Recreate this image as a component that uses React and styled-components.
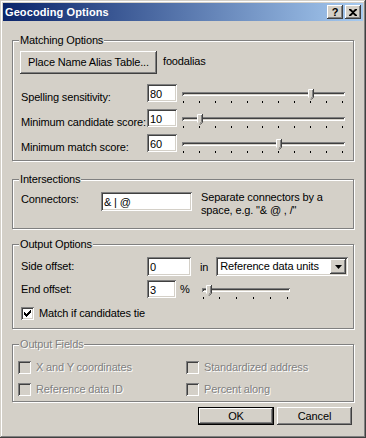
import React from "react";
import styled, { createGlobalStyle } from "styled-components";

const FACE = "#d4d0c8";
const SUNKEN =
  "inset 1px 1px #808080, inset -1px -1px #ffffff, inset 2px 2px #404040, inset -2px -2px #d4d0c8";
const RAISED =
  "inset -1px -1px #404040, inset 1px 1px #ffffff, inset -2px -2px #808080, inset 2px 2px #d4d0c8";

const GlobalStyle = createGlobalStyle`
  html, body {
    margin: 0;
    padding: 0;
    background: ${FACE};
  }
  body {
    font-family: "Liberation Sans", Arial, sans-serif;
    font-size: 11px;
    letter-spacing: -0.15px;
    color: #000;
  }
`;

const Window = styled.div`
  width: 366px;
  height: 438px;
  box-sizing: border-box;
  padding: 3px;
  background: ${FACE};
  box-shadow: inset -1px -1px #404040, inset 1px 1px ${FACE},
    inset -2px -2px #808080, inset 2px 2px #ffffff;
  display: flex;
  flex-direction: column;
`;

const TitleBar = styled.div`
  height: 18px;
  flex-shrink: 0;
  display: flex;
  align-items: center;
  justify-content: space-between;
  padding: 0 2px;
  background: linear-gradient(to right, #0a246a, #a6caf0);
`;

const Title = styled.span`
  color: #fff;
  font-weight: bold;
  font-size: 11px;
  letter-spacing: 0.1px;
`;

const CaptionButtons = styled.div`
  display: flex;
  gap: 2px;
`;

const CaptionButton = styled.div`
  width: 16px;
  height: 14px;
  box-sizing: border-box;
  background: ${FACE};
  box-shadow: ${RAISED};
  display: flex;
  align-items: center;
  justify-content: center;
  font-weight: bold;
  font-size: 11px;
  line-height: 14px;
`;

const Body = styled.div`
  padding: 0 9px;
  display: flex;
  flex-direction: column;
`;

const Group = styled.div`
  margin-top: ${(p) => p.$mt}px;
  border: 1px solid #808080;
  box-shadow: inset 1px 1px #fff, 1px 1px #fff;
  padding: 0 8px ${(p) => p.$pb}px 8px;
`;

const Legend = styled.div`
  width: fit-content;
  margin: -7px 0 0 -2px;
  padding: 0 1px;
  line-height: 13px;
  background: ${FACE};
  color: ${(p) => (p.$disabled ? "#808080" : "#000")};
  text-shadow: ${(p) => (p.$disabled ? "1px 1px #fff" : "none")};
`;

const Row = styled.div`
  display: flex;
  align-items: flex-start;
  height: ${(p) => p.$h}px;
  margin-top: ${(p) => p.$mt || 0}px;
`;

const Label = styled.span`
  width: ${(p) => (p.$w ? p.$w + "px" : "auto")};
  flex-shrink: 0;
  padding-top: ${(p) => p.$pt || 0}px;
  margin-left: ${(p) => p.$ml || 0}px;
  line-height: 13px;
  white-space: nowrap;
`;

const Field = styled.div`
  width: ${(p) => p.$w}px;
  height: ${(p) => p.$h}px;
  flex-shrink: 0;
  box-sizing: border-box;
  padding: ${(p) => p.$pt || 4}px 3px 0;
  background: #fff;
  box-shadow: ${SUNKEN};
  line-height: 13px;
  white-space: nowrap;
  overflow: hidden;
`;

const Button = styled.div`
  width: ${(p) => p.$w}px;
  height: ${(p) => p.$h}px;
  flex-shrink: 0;
  box-sizing: border-box;
  margin-left: ${(p) => p.$ml || 0}px;
  background: ${FACE};
  box-shadow: ${RAISED};
  border: ${(p) => (p.$default ? "1px solid #000" : "none")};
  display: flex;
  align-items: center;
  justify-content: center;
  line-height: 13px;
  white-space: nowrap;
`;

const Aside = styled.span`
  margin-left: ${(p) => p.$ml || 0}px;
  margin-top: ${(p) => p.$mt || 0}px;
  line-height: 13px;
  padding-top: ${(p) => p.$pt || 0}px;
  white-space: nowrap;
`;

const SliderBox = styled.div`
  position: relative;
  width: ${(p) => p.$w}px;
  margin-left: ${(p) => p.$ml || 0}px;
  padding-top: ${(p) => p.$pt}px;
  flex-shrink: 0;
`;

const Track = styled.div`
  height: 4px;
  background: ${FACE};
  box-shadow: inset 1px 1px #808080, inset -1px -1px #ffffff,
    inset 2px 2px #404040;
`;

const Ticks = styled.div`
  display: flex;
  justify-content: space-between;
  margin: 5px 2px 0 1px;
`;

const Tick = styled.span`
  width: 1px;
  height: 2px;
  background: #000;
`;

const Thumb = styled.svg`
  position: absolute;
  top: ${(p) => p.$top}px;
`;

const Combo = styled.div`
  width: 132px;
  height: 19px;
  flex-shrink: 0;
  box-sizing: border-box;
  margin-left: 8px;
  padding: 2px;
  background: #fff;
  box-shadow: ${SUNKEN};
  display: flex;
  align-items: stretch;
`;

const ComboText = styled.span`
  flex: 1;
  padding: 1px 0 0 2px;
  line-height: 13px;
`;

const ComboButton = styled.div`
  width: 16px;
  background: ${FACE};
  box-shadow: ${RAISED};
  display: flex;
  align-items: center;
  justify-content: center;
`;

const CheckRow = styled.label`
  display: flex;
  align-items: center;
  gap: ${(p) => p.$gap || 5}px;
  line-height: 13px;
  color: ${(p) => (p.$disabled ? "#808080" : "#000")};
  text-shadow: ${(p) => (p.$disabled ? "1px 1px #fff" : "none")};
`;

const Box = styled.span`
  width: 13px;
  height: 13px;
  flex-shrink: 0;
  box-sizing: border-box;
  background: ${(p) => (p.$disabled ? FACE : "#fff")};
  box-shadow: ${SUNKEN};
  display: flex;
  align-items: center;
  justify-content: center;
`;

const FieldGrid = styled.div`
  display: grid;
  grid-template-columns: 168px 1fr;
  row-gap: 9px;
  margin: 10px 0 0 -3px;
`;

const Footer = styled.div`
  display: flex;
  justify-content: flex-end;
  gap: 3px;
  margin: 5px 2px 0 0;
`;

const CHECK_COLS = [2, 3, 4, 3, 2, 1, 0];

const CheckMark = () => (
  <svg width="7" height="7" viewBox="0 0 7 7">
    {CHECK_COLS.map((y, x) => (
      <rect key={x} x={x} y={y} width="1" height="3" fill="#000" />
    ))}
  </svg>
);

const Checkbox = ({ checked, disabled, label, gap }) => (
  <CheckRow $disabled={disabled} $gap={gap}>
    <Box $disabled={disabled}>{checked && <CheckMark />}</Box>
    {label}
  </CheckRow>
);

const Slider = ({ width, ticks, value, max, ml, pt }) => {
  const span = width - 4;
  const x = 1 + Math.round((value / max) * span);
  return (
    <SliderBox $w={width} $ml={ml} $pt={pt}>
      <Track />
      <Ticks>
        {Array.from({ length: ticks }).map((_, i) => (
          <Tick key={i} />
        ))}
      </Ticks>
      <Thumb
        $top={pt - 3}
        width="6"
        height="11"
        viewBox="0 0 6 11"
        style={{ left: x - 2 }}
      >
        <polygon points="0,0 6,0 6,8 3,11 0,8" fill={FACE} />
        <path d="M0.5 8.5V0.5H5" stroke="#fff" fill="none" />
        <path d="M5.5 0V8.2L3 10.7" stroke="#404040" fill="none" />
        <path d="M4.5 1V7.8L3 9.3" stroke="#808080" fill="none" />
      </Thumb>
    </SliderBox>
  );
};

const ScoreRow = ({ label, value, mt }) => (
  <Row $mt={mt} $h={18}>
    <Label $w={126} $pt={7}>
      {label}
    </Label>
    <Field $w={30} $h={18}>
      {value}
    </Field>
    <Slider width={163} ticks={11} value={value} max={100} ml={5} pt={8} />
  </Row>
);

export default function App() {
  return (
    <>
      <GlobalStyle />
      <Window>
        <TitleBar>
          <Title>Geocoding Options</Title>
          <CaptionButtons>
            <CaptionButton>?</CaptionButton>
            <CaptionButton>
              <svg width="8" height="7" viewBox="0 0 8 7">
                <path
                  d="M0 0h2l2 2 2-2h2v1L5 3.5 8 6v1H6L4 5 2 7H0V6l3-2.5L0 1z"
                  fill="#000"
                />
              </svg>
            </CaptionButton>
          </CaptionButtons>
        </TitleBar>

        <Body>
          <Group $mt={19} $pb={8}>
            <Legend>Matching Options</Legend>
            <Row $mt={4} $h={23}>
              <Button $w={137} $h={23} $ml={-1}>
                Place Name Alias Table...
              </Button>
              <Label $ml={6} $pt={4}>
                foodalias
              </Label>
            </Row>
            <ScoreRow label="Spelling sensitivity:" value={80} mt={10} />
            <ScoreRow label="Minimum candidate score:" value={10} mt={7} />
            <ScoreRow label="Minimum match score:" value={60} mt={7} />
          </Group>

          <Group $mt={18} $pb={11}>
            <Legend>Intersections</Legend>
            <Row $mt={6} $h={25}>
              <Label $w={80} $pt={1}>
                Connectors:
              </Label>
              <Field $w={91} $h={19}>
                &amp; | @
              </Field>
              <Aside $ml={9} $mt={-1}>
                Separate connectors by a
                <br />
                space, e.g. "&amp; @ , /"
              </Aside>
            </Row>
          </Group>

          <Group $mt={15} $pb={8}>
            <Legend>Output Options</Legend>
            <Row $mt={6} $h={19}>
              <Label $w={126} $pt={3}>
                Side offset:
              </Label>
              <Field $w={44} $h={19}>
                0
              </Field>
              <Aside $ml={9} $pt={4}>
                in
              </Aside>
              <Combo>
                <ComboText>Reference data units</ComboText>
                <ComboButton>
                  <svg width="7" height="4" viewBox="0 0 7 4">
                    <path d="M0 0h7L3.5 4z" fill="#000" />
                  </svg>
                </ComboButton>
              </Combo>
            </Row>
            <Row $mt={4} $h={18}>
              <Label $w={126} $pt={3}>
                End offset:
              </Label>
              <Field $w={29} $h={18}>
                3
              </Field>
              <Aside $ml={4} $pt={3}>
                %
              </Aside>
              <Slider width={88} ticks={6} value={3} max={50} ml={12} pt={8} />
            </Row>
            <Row $mt={9} $h={13}>
              <Checkbox checked label="Match if candidates tie" gap={5} />
            </Row>
          </Group>

          <Group $mt={15} $pb={5}>
            <Legend $disabled>Output Fields</Legend>
            <FieldGrid>
              <Checkbox disabled label="X and Y coordinates" />
              <Checkbox disabled label="Standardized address" />
              <Checkbox disabled label="Reference data ID" />
              <Checkbox disabled label="Percent along" />
            </FieldGrid>
          </Group>

          <Footer>
            <Button $w={76} $h={18} $default>
              OK
            </Button>
            <Button $w={75} $h={18}>
              Cancel
            </Button>
          </Footer>
        </Body>
      </Window>
    </>
  );
}
